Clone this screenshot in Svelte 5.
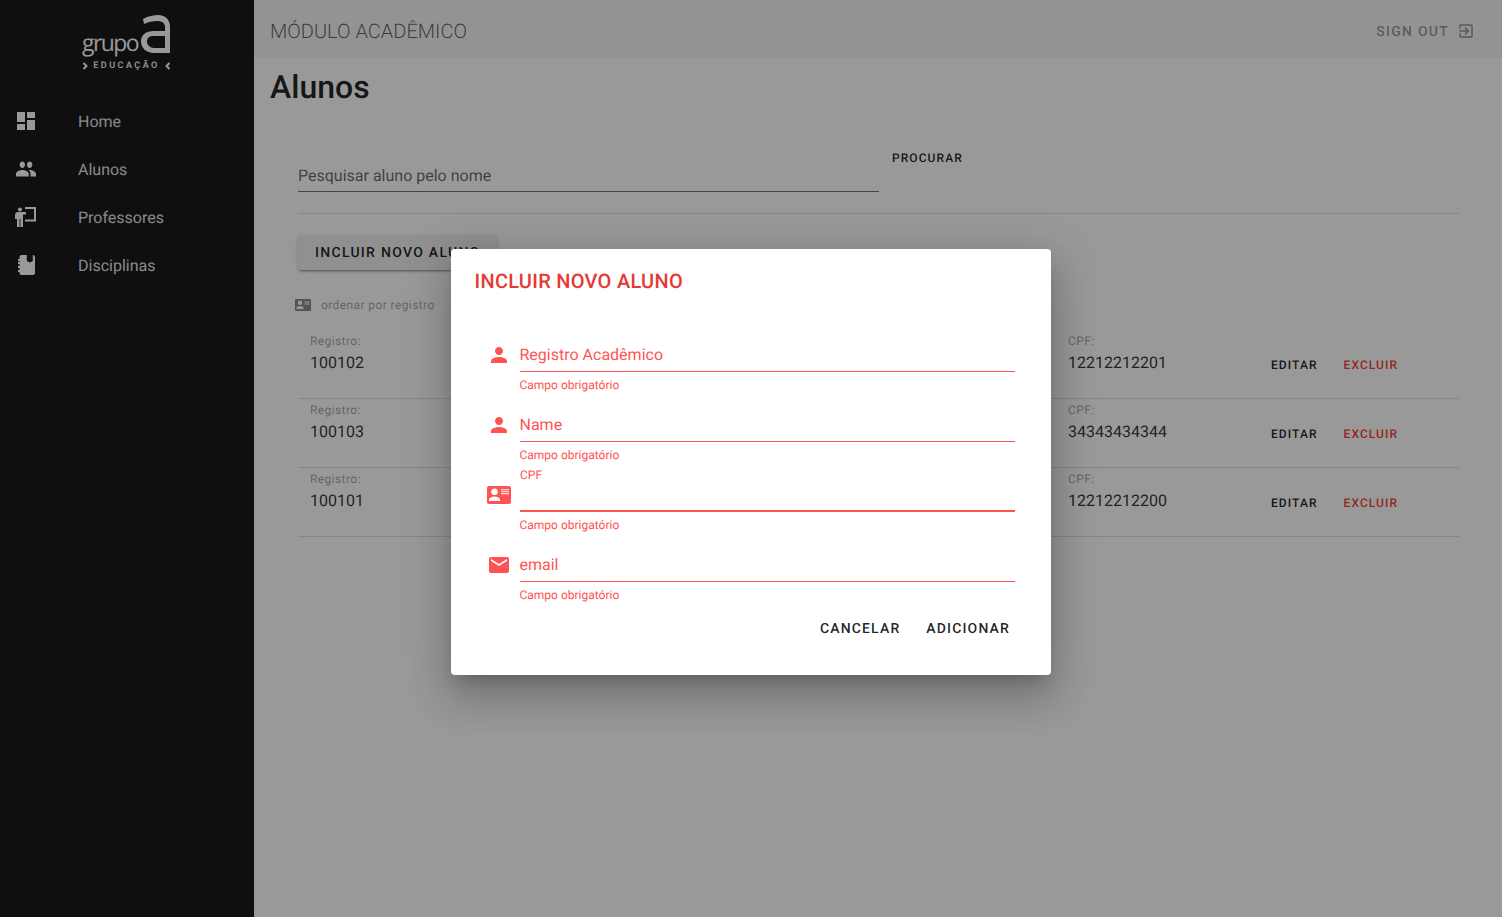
<script lang="ts">
  // tela de alunos com o modal de inclusão aberto
  const nav = ['Home', 'Alunos', 'Professores', 'Disciplinas'];

  const alunos = [
    { registro: '100102', cpf: '12212212201' },
    { registro: '100103', cpf: '34343434344' },
    { registro: '100101', cpf: '12212212200' },
  ];

  const person = 'M12 12c2.21 0 4-1.79 4-4s-1.79-4-4-4-4 1.79-4 4 1.79 4 4 4zm0 2c-2.67 0-8 1.34-8 4v2h16v-2c0-2.66-5.33-4-8-4z';
  const card = 'M22 3H2C.9 3 0 3.9 0 5v14c0 1.100.9 2 2 2h20c1.100 0 2-.9 2-2V5c0-1.100-.9-2-2-2zM7.500 5.400a3.300 3.300 0 1 1 0 6.600 3.300 3.300 0 1 1 0-6.600zM2 18v-1.400c0-1.800 3.700-3 5.500-3s5.500 1.200 5.500 3V18zM14 6.300h8v.9h-8zM14 8.300h8v.9h-8zM14 10.300h8v.9h-8z';
  const mail = 'M20 4H4c-1.1 0-2 .9-2 2v12c0 1.1.9 2 2 2h16c1.1 0 2-.9 2-2V6c0-1.1-.9-2-2-2zm0 4l-8 5-8-5V6l8 5 8-5v2z';
</script>

<div class="page">
  <aside class="sidebar">
    <div class="logo">
      <div class="logo__top">
        <span class="logo__grupo">grupo</span>
        <svg class="logo__a" width="31" height="40" viewBox="0 0 31 40" aria-hidden="true">
          <path fill-rule="evenodd" d="M3 4C8 1 14 0 18 0 26 0 30 5 30 12V38H14C6 38 1 33 1 26 1 20 6 16 14 16H25V12C25 8 22 6 17 6 13 6 8 7 4 9ZM25 21H14C9 21 7 23 7 26.5 7 30 10 33 14 33H25Z" />
        </svg>
      </div>
      <div class="logo__sub">
        <svg width="6" height="8" viewBox="0 0 6 8" aria-hidden="true"><path d="M1.500 1L4.500 4 1.500 7" /></svg>
        <span>EDUCAÇÃO</span>
        <svg width="6" height="8" viewBox="0 0 6 8" aria-hidden="true"><path d="M4.500 1L1.500 4 4.500 7" /></svg>
      </div>
    </div>

    <nav>
      {#each nav as item, i}
        <div class="nav-item">
          <svg class="nav-item__icon" width="24" height="24" viewBox="0 0 24 24" aria-hidden="true">
            {#if i === 0}
              <path d="M3 13h8V3H3v10zm0 8h8v-6H3v6zm10 0h8V11h-8v10zm0-18v6h8V3h-8z" />
            {:else if i === 1}
              <path transform="translate(12 12) scale(.91 1.08) translate(-12 -12)" d="M16 11c1.66 0 2.99-1.34 2.99-3S17.66 5 16 5c-1.66 0-3 1.34-3 3s1.34 3 3 3zm-8 0c1.66 0 2.99-1.34 2.99-3S9.66 5 8 5C6.34 5 5 6.34 5 8s1.34 3 3 3zm0 2c-2.33 0-7 1.17-7 3.5V19h14v-2.5c0-2.33-4.67-3.5-7-3.5zm8 0c-.29 0-.62.02-.97.05 1.16.84 1.97 1.97 1.97 3.45V19h6v-2.5c0-2.33-4.67-3.5-7-3.5z" />
            {:else if i === 2}
              <circle cx="6" cy="4.500" r="2" />
              <path d="M11 2h11v14.500H11v-2h9V4h-9z" />
              <path d="M1 10c0-2 1.200-3 3-3h8v2.400H9V22H6.400v-8H5.600v8H3v-8H1z" />
            {:else}
              <path transform="translate(1 0)" d="M6.500 2H11.800v6l3 1.600 3-1.600V2H18c1.100 0 2 .9 2 2v16c0 1.100-.9 2-2 2H6.500c-1.100 0-2-.9-2-2v-1H3v-2h1.500v-2H3v-2h1.500v-2H3v-2h1.500V8H3V6h1.500V4c0-1.100.9-2 2-2z" />
            {/if}
          </svg>
          <span>{item}</span>
        </div>
      {/each}
    </nav>
  </aside>

  <div class="main">
    <header class="topbar">
      <span class="topbar__title">MÓDULO ACADÊMICO</span>
      <span class="signout">
        <span class="signout__text">SIGN OUT</span>
        <svg width="18" height="18" viewBox="0 0 24 24" aria-hidden="true">
          <path d="M10.090 15.590L11.500 17l5-5-5-5-1.410 1.410L12.670 11H3v2h9.670l-2.580 2.590zM19 3H5c-1.110 0-2 .9-2 2v4h2V5h14v14H5v-4H3v4c0 1.100.89 2 2 2h14c1.100 0 2-.9 2-2V5c0-1.100-.9-2-2-2z" />
        </svg>
      </span>
    </header>

    <section class="content">
      <h1>Alunos</h1>

      <div class="panel">
        <div class="search">
          <div class="search__field">Pesquisar aluno pelo nome</div>
          <span class="search__btn">PROCURAR</span>
        </div>

        <div class="toolbar">
          <div class="add-btn">INCLUIR NOVO ALUNO</div>
        </div>

        <div class="sort">
          <svg width="16" height="16" viewBox="0 0 24 24" aria-hidden="true"><path fill-rule="evenodd" d={card} /></svg>
          <span>ordenar por registro</span>
        </div>

        <div class="rows">
          {#each alunos as aluno}
            <div class="row">
              <div class="cell">
                <small>Registro:</small>
                <span>{aluno.registro}</span>
              </div>
              <div class="cell">
                <small>CPF:</small>
                <span>{aluno.cpf}</span>
              </div>
              <div class="actions">
                <span class="edit">EDITAR</span>
                <span class="del">EXCLUIR</span>
              </div>
            </div>
          {/each}
        </div>
      </div>
    </section>
  </div>

  <div class="backdrop">
    <div class="dialog" role="dialog" aria-label="Incluir novo aluno">
      <h2>INCLUIR NOVO ALUNO</h2>

      <div class="fields">
        <div class="field">
          <svg width="24" height="24" viewBox="0 0 24 24" aria-hidden="true"><path d={person} /></svg>
          <div class="field__box">
            <div class="field__input">Registro Acadêmico</div>
            <div class="field__help">Campo obrigatório</div>
          </div>
        </div>
        <div class="field">
          <svg width="24" height="24" viewBox="0 0 24 24" aria-hidden="true"><path d={person} /></svg>
          <div class="field__box">
            <div class="field__input">Name</div>
            <div class="field__help">Campo obrigatório</div>
          </div>
        </div>
        <div class="field field--focus">
          <svg width="24" height="24" viewBox="0 0 24 24" aria-hidden="true"><path fill-rule="evenodd" d={card} /></svg>
          <div class="field__box">
            <div class="field__label">CPF</div>
            <div class="field__input"></div>
            <div class="field__help">Campo obrigatório</div>
          </div>
        </div>
        <div class="field">
          <svg width="24" height="24" viewBox="0 0 24 24" aria-hidden="true"><path d={mail} /></svg>
          <div class="field__box">
            <div class="field__input">email</div>
            <div class="field__help">Campo obrigatório</div>
          </div>
        </div>
      </div>

      <div class="dialog__actions">
        <span>CANCELAR</span>
        <span>ADICIONAR</span>
      </div>
    </div>
  </div>
</div>

<style>
  :global(body) {
    margin: 0;
    background: #fff;
    font-family: Roboto, "Liberation Sans", sans-serif;
    color: rgba(0, 0, 0, 0.87);
    text-rendering: geometricPrecision;
  }

  .page {
    position: relative;
    display: flex;
    height: 917px;
    overflow: hidden;
  }

  /* ---- Sidebar ---- */
  .sidebar {
    width: 254px;
    flex: none;
    background: #191919;
    color: rgba(255, 255, 255, 0.9);
  }

  .logo {
    height: 97px;
    box-sizing: border-box;
    padding-top: 14px;
    padding-left: 82px;
    color: #fff;
  }

  .logo__top {
    display: flex;
    align-items: flex-end;
    height: 42px;
  }

  .logo__grupo {
    font-family: "Open Sans", sans-serif;
    font-size: 23px;
    font-weight: 400;
    line-height: 36px;
    letter-spacing: -1.6px;
    margin-bottom: -4px;
    width: 58px;
  }

  .logo__a {
    display: block;
    margin-bottom: 1px;
    fill: #fff;
  }

  .logo__sub {
    display: flex;
    justify-content: space-between;
    align-items: center;
    width: 89px;
    margin-top: 4px;
    font-size: 9px;
    font-weight: 500;
    line-height: 12px;
    letter-spacing: 2.5px;
  }

  .logo__sub svg {
    fill: none;
    stroke: #fff;
    stroke-width: 2;
  }

  .nav-item {
    display: flex;
    align-items: center;
    height: 48px;
    font-size: 16px;
  }

  .nav-item__icon {
    margin-left: 14px;
    margin-right: 40px;
    fill: #fff;
  }

  /* ---- Main ---- */
  .main {
    flex: 1;
    min-width: 0;
  }

  .topbar {
    display: flex;
    justify-content: space-between;
    align-items: center;
    height: 58px;
    padding: 4px 27px 0 16px;
    box-sizing: border-box;
    background: #f5f5f5;
  }

  .topbar__title {
    font-size: 20px;
    font-weight: 300;
    color: rgba(0, 0, 0, 0.6);
  }

  .signout {
    display: flex;
    align-items: center;
    gap: 8px;
    font-size: 14px;
    font-weight: 500;
    letter-spacing: 1.25px;
    color: rgba(0, 0, 0, 0.4);
  }

  .signout__text {
    margin-top: 2px;
  }

  .signout svg {
    fill: rgba(0, 0, 0, 0.4);
  }

  .content {
    padding: 0 16px;
  }

  h1 {
    margin: 10px 0 0;
    font-size: 32px;
    line-height: 38px;
    font-weight: 500;
  }

  .panel {
    padding: 0 27px 0 28px;
  }

  .search {
    display: flex;
    height: 64px;
    padding-top: 43px;
    border-bottom: 1px solid rgba(0, 0, 0, 0.12);
  }

  .search__field {
    width: 581px;
    height: 40px;
    box-sizing: border-box;
    padding-top: 12px;
    margin-top: 3px;
    border-bottom: 1px solid rgba(0, 0, 0, 0.55);
    font-size: 16px;
    line-height: 24px;
    color: rgba(0, 0, 0, 0.6);
  }

  .search__btn {
    margin-left: 13px;
    margin-top: -3px;
    font-size: 12px;
    line-height: 24px;
    font-weight: 500;
    letter-spacing: 1.07px;
  }

  .toolbar {
    padding-top: 21px;
  }

  .add-btn {
    width: 199px;
    height: 35px;
    box-sizing: border-box;
    padding-left: 17px;
    border-radius: 4px;
    background: #f0f0f0;
    box-shadow: 0 3px 1px -2px rgba(0, 0, 0, 0.2), 0 2px 2px rgba(0, 0, 0, 0.14), 0 1px 5px rgba(0, 0, 0, 0.12);
    font-size: 14px;
    line-height: 37px;
    font-weight: 500;
    letter-spacing: 1.28px;
    white-space: nowrap;
    overflow: hidden;
  }

  .sort {
    display: flex;
    align-items: center;
    gap: 10px;
    margin: 26px 0 0 -3px;
    height: 18px;
    font-size: 12px;
    letter-spacing: 0.4px;
    color: rgba(0, 0, 0, 0.38);
  }

  .sort svg {
    fill: rgba(0, 0, 0, 0.45);
  }

  .rows {
    margin-top: 17px;
  }

  .row {
    display: grid;
    grid-template-columns: 758px 203px 1fr;
    height: 68px;
    padding-left: 12px;
    box-sizing: border-box;
    border-bottom: 1px solid rgba(0, 0, 0, 0.12);
    margin-bottom: 1px;
  }

  .cell {
    display: flex;
    flex-direction: column;
    padding-top: 3px;
  }

  .cell small {
    font-size: 12px;
    line-height: 14px;
    letter-spacing: 0.4px;
    color: rgba(0, 0, 0, 0.38);
  }

  .cell span {
    margin-top: 3px;
    font-size: 16px;
    line-height: 24px;
    color: rgba(0, 0, 0, 0.8);
  }

  .actions {
    display: flex;
    gap: 26px;
    padding-top: 22px;
    font-size: 12px;
    line-height: 24px;
    font-weight: 500;
    letter-spacing: 1.07px;
  }

  .del {
    color: #f44336;
  }

  /* ---- Modal ---- */
  .backdrop {
    position: absolute;
    inset: 0;
    display: flex;
    justify-content: center;
    align-items: flex-start;
    padding-top: 249px;
    box-sizing: border-box;
    background: rgba(0, 0, 0, 0.4);
  }

  .dialog {
    width: 600px;
    height: 426px;
    box-sizing: border-box;
    border-radius: 4px;
    background: #fff;
    box-shadow: 0 11px 15px -7px rgba(0, 0, 0, 0.2), 0 24px 38px 3px rgba(0, 0, 0, 0.14), 0 9px 46px 8px rgba(0, 0, 0, 0.12);
  }

  h2 {
    margin: 0;
    padding: 20px 24px 0 23.5px;
    font-size: 20px;
    line-height: 24px;
    font-weight: 500;
    letter-spacing: 0.27px;
    color: #e53935;
  }

  .fields {
    padding: 43px 36px 0 35px;
    color: #ff5252;
  }

  .field {
    display: flex;
    height: 70px;
  }

  .field svg {
    flex: none;
    margin: 7px 9px 0 0.5px;
    fill: #ff5252;
  }

  .field__box {
    flex: 1;
    min-width: 0;
  }

  .field__input {
    height: 36px;
    box-sizing: border-box;
    padding-top: 7px;
    border-bottom: 1px solid #ff5252;
    font-size: 16px;
    line-height: 24px;
  }

  .field__help {
    margin-top: 6px;
    font-size: 12px;
    line-height: 14px;
  }

  .field--focus .field__label {
    height: 16px;
    margin: -9px 0 -7px;
    padding-left: 0.5px;
    font-size: 12px;
    line-height: 16px;
  }

  .field--focus .field__input {
    border-bottom-width: 2px;
  }

  .dialog__actions {
    display: flex;
    justify-content: flex-end;
    gap: 26px;
    padding-right: 41px;
    margin-top: 3px;
    font-size: 14px;
    line-height: 20px;
    font-weight: 500;
    letter-spacing: 1.15px;
  }
</style>
